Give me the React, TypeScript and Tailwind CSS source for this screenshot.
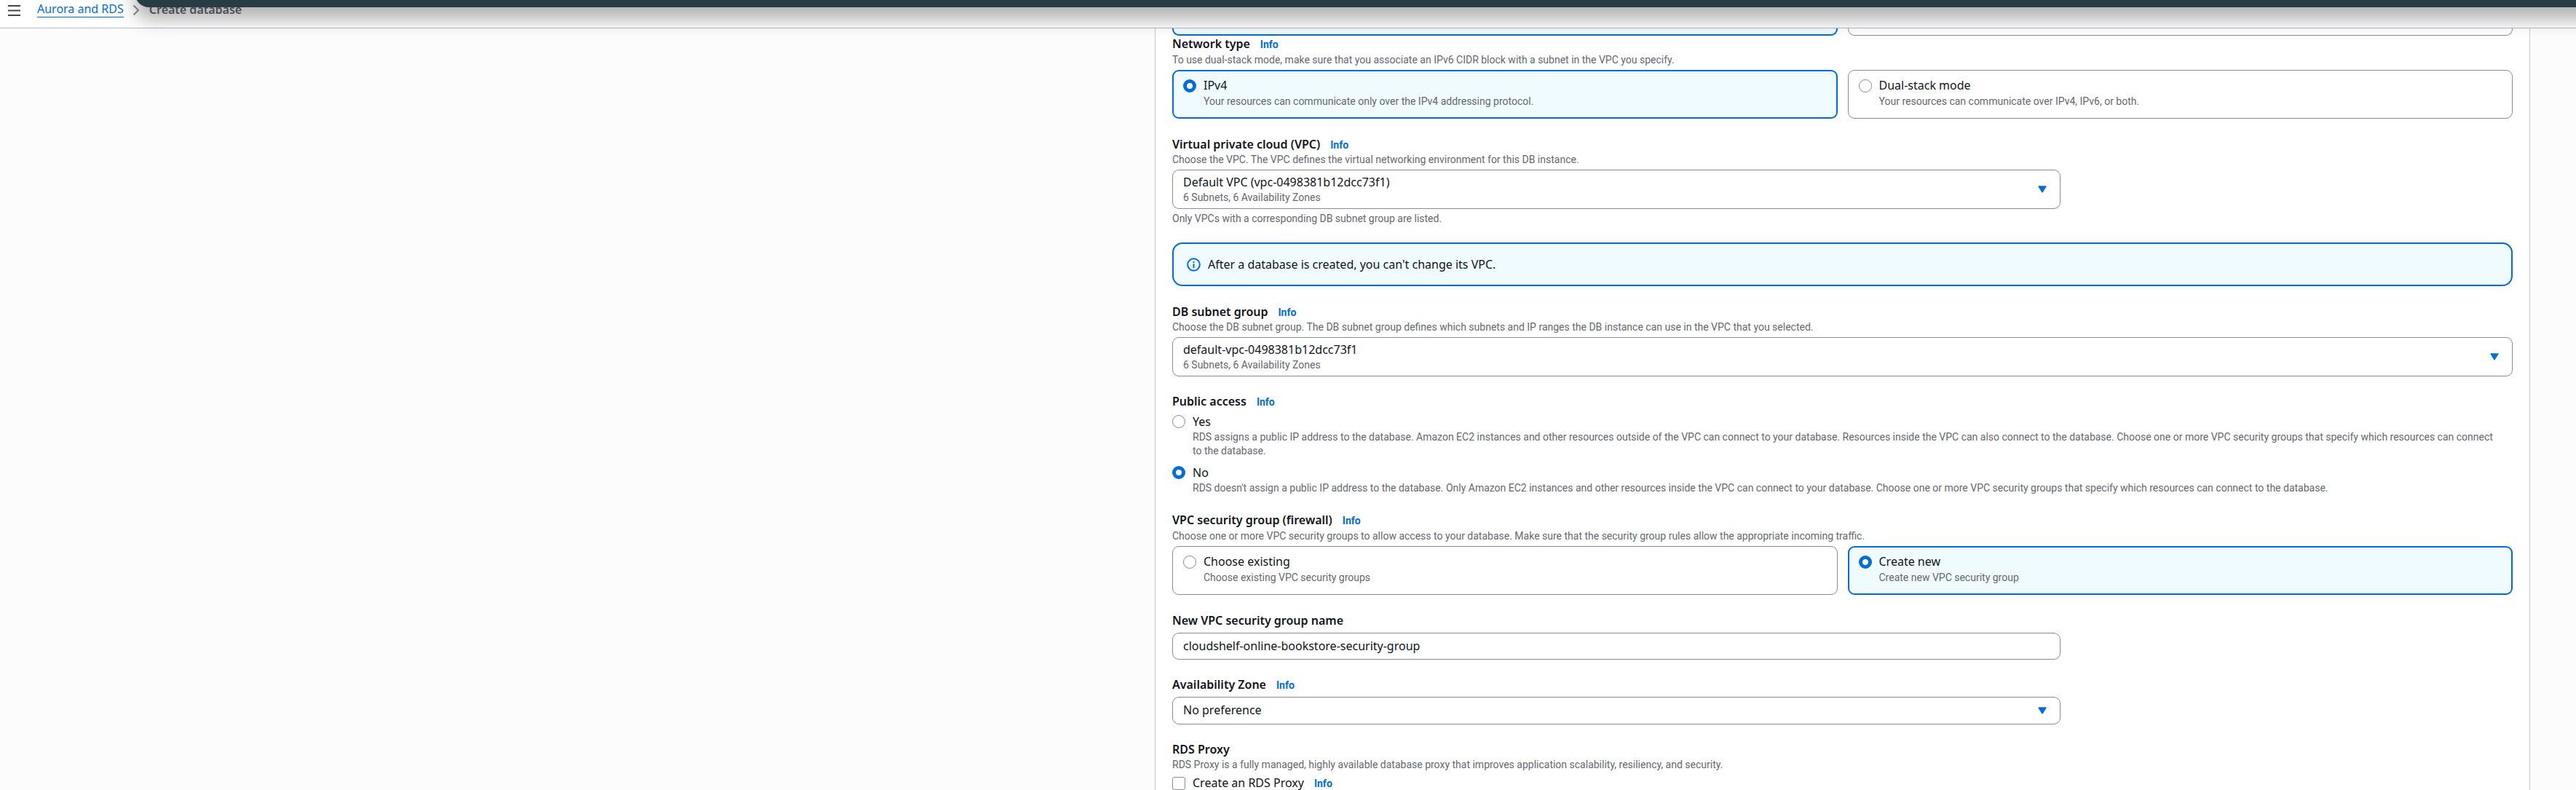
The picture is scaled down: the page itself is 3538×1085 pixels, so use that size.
import type { ReactNode } from "react";

const help = "font-['Roboto',sans-serif] text-[14px] leading-[19px] text-[#656871]";
const control = "w-full rounded-[9px] border border-[#8c8c94] bg-white px-[14px] text-[16px] leading-[22px] text-[#0f141a]";

function InfoLink() {
  return (
    <a href="#info" className="ml-[14px] font-['Roboto',sans-serif] text-[14px] leading-none font-bold text-[#006ce0]">
      Info
    </a>
  );
}

function FieldLabel({ children, htmlFor, id, info }: { children: ReactNode; htmlFor?: string; id?: string; info?: boolean }) {
  return (
    <div className="flex items-baseline leading-[22px]">
      {htmlFor ? (
        <label htmlFor={htmlFor} className="font-semibold">{children}</label>
      ) : (
        <h3 id={id} className="font-semibold">{children}</h3>
      )}
      {info && <InfoLink />}
    </div>
  );
}

function Radio({ name, id, checked }: { name: string; id: string; checked?: boolean }) {
  return (
    <input
      type="radio"
      name={name}
      id={id}
      defaultChecked={checked}
      className="size-[18px] shrink-0 appearance-none rounded-full border border-[#8c8c94] bg-white checked:border-[5px] checked:border-[#006ce0]"
    />
  );
}

function Tile({ name, id, title, text, checked }: { name: string; id: string; title: string; text: string; checked?: boolean }) {
  return (
    <label
      htmlFor={id}
      className={
        checked
          ? "flex gap-[10px] rounded-[9px] border-2 border-[#006ce0] bg-[#f0fbff] px-[13px] pt-2 pb-3"
          : "flex gap-[10px] rounded-[9px] border border-[#8c8c94] bg-white px-[14px] pt-[9px] pb-[13px]"
      }
    >
      <span className="flex pt-[3px]">
        <Radio name={name} id={id} checked={checked} />
      </span>
      <span className="flex flex-col gap-[2px]">
        <span className="leading-[22px]">{title}</span>
        <span className={help}>{text}</span>
      </span>
    </label>
  );
}

function RadioRow({ name, id, title, text, checked }: { name: string; id: string; title: string; text: string; checked?: boolean }) {
  return (
    <label htmlFor={id} className="flex gap-[10px]">
      <span className="flex pt-[2px]">
        <Radio name={name} id={id} checked={checked} />
      </span>
      <span className="flex flex-col gap-px">
        <span className="leading-[22px]">{title}</span>
        <span className={help}>{text}</span>
      </span>
    </label>
  );
}

function Caret() {
  return (
    <svg viewBox="0 0 12 10" className="pointer-events-none absolute top-1/2 right-[19px] h-[10px] w-[12px] -translate-y-1/2" aria-hidden="true">
      <path d="M1 1h10L6 9z" fill="#006ce0" stroke="#006ce0" strokeWidth="1.4" strokeLinejoin="round" />
    </svg>
  );
}

function DetailSelect({ id, value, detail }: { id: string; value: string; detail: string }) {
  return (
    <div className="relative mt-1">
      <select id={id} className={`${control} block appearance-none pt-[5px] pb-[25px]`}>
        <option>{value}</option>
      </select>
      <span className={`${help} pointer-events-none absolute bottom-[6px] left-[15px]`}>{detail}</span>
      <Caret />
    </div>
  );
}

export default function App() {
  return (
    <div className="relative flex h-screen flex-col overflow-hidden bg-[#fcfcfc] font-['Noto_Sans',sans-serif] text-[16px] text-[#0f141a]">
      <header className="flex h-[39px] shrink-0 items-start border-b border-[#b9b9c4] bg-white pl-[11px]">
        <button type="button" aria-label="Open navigation" className="mt-[7px]">
          <svg viewBox="0 0 17 15" className="block h-[15px] w-[17px]" aria-hidden="true">
            <path d="M0 1h17M0 7.5h17M0 14h17" stroke="#424650" strokeWidth="2" />
          </svg>
        </button>
        <nav aria-label="Breadcrumbs" className="ml-[23px] pt-[2px]">
          <ol className="flex items-start">
            <li>
              <a href="#rds" className="block border-b border-[#006ce0] leading-[21px] text-[#006ce0]">Aurora and RDS</a>
            </li>
            <li className="flex items-start">
              <svg viewBox="0 0 10 16" className="mt-1 ml-3 h-4 w-[10px]" fill="none" aria-hidden="true">
                <path d="M1.5 1.5 8 8l-6.5 6.5" stroke="#8c8c94" strokeWidth="2" />
              </svg>
              <span aria-current="page" className="ml-[13px] leading-[22px] font-semibold text-[#656871]">Create database</span>
            </li>
          </ol>
        </nav>
      </header>

      <div className="pointer-events-none absolute top-[-90px] right-[-60px] left-[185px] z-10 h-[100px] rounded-bl-[20px] bg-[#273c43] shadow-[0_17px_24px_rgba(0,0,0,0.3)]" />

      <main className="grid min-h-0 flex-1 grid-cols-[1586fr_1889fr_63fr]">
        <form className="col-start-2 flex flex-col gap-[23px] border-x border-[#c6c6cd] bg-white px-[23px]" onSubmit={(e) => e.preventDefault()}>
          <div className="flex flex-col">
            <div className="grid grid-cols-2 gap-[14px]">
              <div className="h-[10px] rounded-b-[9px] border-2 border-t-0 border-[#006ce0] bg-[#f0fbff]" />
              <div className="h-[10px] rounded-b-[9px] border border-t-0 border-[#8c8c94] bg-white" />
            </div>
            <section className="pb-px" role="radiogroup" aria-labelledby="network-type">
              <FieldLabel id="network-type" info>Network type</FieldLabel>
              <p className={`${help} mt-[2px]`}>
                To use dual-stack mode, make sure that you associate an IPv6 CIDR block with a subnet in the VPC you specify.
              </p>
              <div className="mt-1 grid grid-cols-2 gap-[14px]">
                <Tile name="network" id="ipv4" title="IPv4" text="Your resources can communicate only over the IPv4 addressing protocol." checked />
                <Tile name="network" id="dual" title="Dual-stack mode" text="Your resources can communicate over IPv4, IPv6, or both." />
              </div>
            </section>
          </div>

          <section className="grid grid-cols-3 gap-x-[23px]">
            <div className="col-span-2">
              <FieldLabel htmlFor="vpc" info>Virtual private cloud (VPC)</FieldLabel>
              <p className={`${help} mt-px`}>Choose the VPC. The VPC defines the virtual networking environment for this DB instance.</p>
              <DetailSelect id="vpc" value="Default VPC (vpc-0498381b12dcc73f1)" detail="6 Subnets, 6 Availability Zones" />
              <p className={`${help} mt-1`}>Only VPCs with a corresponding DB subnet group are listed.</p>
            </div>
          </section>

          <div className="pb-px">
            <div role="note" className="flex items-center gap-[10px] rounded-[14px] border-2 border-[#006ce0] bg-[#f0fbff] px-[18px] py-[17px] leading-[22px]">
              <svg viewBox="0 0 19 19" className="size-[19px]" fill="none" aria-hidden="true">
                <circle cx="9.5" cy="9.5" r="8.3" stroke="#006ce0" strokeWidth="2" />
                <path d="M9.5 8.3v5.6M9.5 5v2" stroke="#006ce0" strokeWidth="2" />
              </svg>
              <span>After a database is created, you can't change its VPC.</span>
            </div>
          </div>

          <section>
            <FieldLabel htmlFor="subnet-group" info>DB subnet group</FieldLabel>
            <p className={`${help} mt-px`}>
              Choose the DB subnet group. The DB subnet group defines which subnets and IP ranges the DB instance can use in the VPC that you selected.
            </p>
            <DetailSelect id="subnet-group" value="default-vpc-0498381b12dcc73f1" detail="6 Subnets, 6 Availability Zones" />
          </section>

          <section role="radiogroup" aria-labelledby="public-access">
            <FieldLabel id="public-access" info>Public access</FieldLabel>
            <div className="mt-[6px] flex flex-col gap-[9px]">
              <RadioRow
                name="public"
                id="public-yes"
                title="Yes"
                text={"RDS assigns a public IP address to the database. Amazon EC2 instances and other resources outside of the VPC can connect to your database. Resources inside the VPC can also connect to the database. Choose one or more VPC security groups that specify which resources can connect to\u00a0the\u00a0database."}
              />
              <RadioRow
                name="public"
                id="public-no"
                title="No"
                text="RDS doesn't assign a public IP address to the database. Only Amazon EC2 instances and other resources inside the VPC can connect to your database. Choose one or more VPC security groups that specify which resources can connect to the database."
                checked
              />
            </div>
          </section>

          <section className="pb-px" role="radiogroup" aria-labelledby="security-group">
            <FieldLabel id="security-group" info>VPC security group (firewall)</FieldLabel>
            <p className={`${help} mt-[2px]`}>
              Choose one or more VPC security groups to allow access to your database. Make sure that the security group rules allow the appropriate incoming traffic.
            </p>
            <div className="mt-1 grid grid-cols-2 gap-[14px]">
              <Tile name="sg" id="sg-existing" title="Choose existing" text="Choose existing VPC security groups" />
              <Tile name="sg" id="sg-new" title="Create new" text="Create new VPC security group" checked />
            </div>
          </section>

          <section className="grid grid-cols-3 gap-x-[23px]">
            <div className="col-span-2">
              <FieldLabel htmlFor="sg-name">New VPC security group name</FieldLabel>
              <input id="sg-name" type="text" defaultValue="cloudshelf-online-bookstore-security-group" className={`${control} mt-[6px] block pt-[6px] pb-[7px]`} />
            </div>
          </section>

          <section className="grid grid-cols-3 gap-x-[23px]">
            <div className="col-span-2">
              <FieldLabel htmlFor="az" info>Availability Zone</FieldLabel>
              <div className="relative mt-[6px]">
                <select id="az" className={`${control} block appearance-none pt-[6px] pb-[8px]`}>
                  <option>No preference</option>
                </select>
                <Caret />
              </div>
            </div>
          </section>

          <section>
            <FieldLabel id="rds-proxy">RDS Proxy</FieldLabel>
            <p className={`${help} mt-px`}>
              RDS Proxy is a fully managed, highly available database proxy that improves application scalability, resiliency, and security.
            </p>
            <div className="mt-1 flex items-start">
              <input id="create-proxy" type="checkbox" className="mt-[3px] size-[18px] shrink-0 appearance-none rounded-[3px] border border-[#8c8c94] bg-white checked:bg-[#006ce0]" />
              <div className="ml-[10px] flex items-baseline leading-[22px]">
                <label htmlFor="create-proxy">Create an RDS Proxy</label>
                <InfoLink />
              </div>
            </div>
          </section>
        </form>
      </main>
    </div>
  );
}
